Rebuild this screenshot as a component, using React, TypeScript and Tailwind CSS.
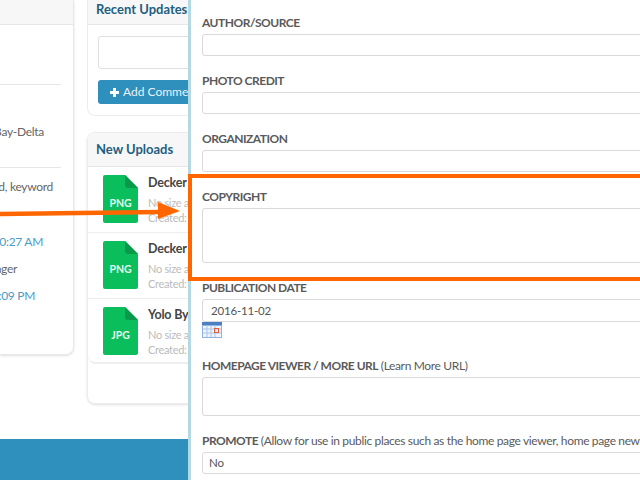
const FileIcon = ({ ext }: { ext: string }) => (
  <div className="relative w-[35px] h-[48px] shrink-0">
    <svg width="35" height="48" viewBox="0 0 35 48" className="block">
      <path d="M2 0H22L35 13V46a2 2 0 0 1-2 2H2a2 2 0 0 1-2-2V2a2 2 0 0 1 2-2Z" fill="#0abf5b" />
      <path d="M22 0L35 13H25a3 3 0 0 1-3-3Z" fill="#089a4a" />
    </svg>
    <span className="absolute left-0 right-0 top-[20px] text-center text-[10.5px] leading-4 font-bold text-[#e6f9ee]">{ext}</span>
  </div>
)

const UploadRow = ({ ext, name, last }: { ext: string; name: string; last?: boolean }) => (
  <div className={`flex gap-[10px] pl-[15px] pt-[8px] ${last ? 'border-b-2 border-[#eeeeee] rounded-b-lg h-[65px]' : 'h-[66px] border-b border-[#eeeeee]'}`}>
    <FileIcon ext={ext} />
    <div className="whitespace-nowrap">
      <div className="text-[12.5px] tracking-[-0.2px] leading-4 font-bold text-[#444444]">{name}</div>
      <div className="mt-1 text-[11px] tracking-[-0.3px] leading-[15px] text-[#bbbbbb]">No size available</div>
      <div className="text-[11px] tracking-[-0.3px] leading-[15px] text-[#bbbbbb]">Created: 2016</div>
    </div>
  </div>
)

const Field = ({ label, note, h, value, pad, gap }: { label: string; note?: string; h: string; value?: string; pad?: string; gap?: boolean }) => (
  <div className={gap ? '' : 'mb-4'}>
    <div className="h-4 leading-[17px] mb-1 text-[12px] whitespace-nowrap text-[#5a5a5a]">
      <span className="font-bold tracking-[-0.5px]">{label}</span>
      {note && <span className="tracking-[-0.35px]"> {note}</span>}
    </div>
    <div className={`${h} ${pad ?? 'pl-2'} w-[520px] border border-[#d9d9d9] rounded-[3px] bg-white text-[11.5px] tracking-[-0.2px] leading-5 text-[#555555] flex items-center`}>{value}</div>
  </div>
)

const Calendar = () => (
  <svg width="20" height="16" viewBox="0 0 20 16" className="block">
    <rect width="20" height="16" fill="#8fb2e0" />
    <rect width="20" height="3" fill="#4a7fc4" />
    <rect x="1" y="4" width="18" height="11" fill="#eef4fb" />
    <path d="M5 3V15M9 3V15M13 3V15M1 7H19M1 11H19" stroke="#a9c4e8" />
    <rect x="12.5" y="6.5" width="4" height="4" fill="none" stroke="#e2603f" />
  </svg>
)

export default function App() {
  return (
    <div className="relative w-[640px] h-[480px] overflow-hidden bg-white flex [font-family:Lato,sans-serif]">
      <div className="w-[188px] shrink-0 flex flex-col overflow-hidden">
        <div className="h-[439px] flex gap-[13px]">
          <div className="w-[74px] h-[355px] shrink-0 border-r border-b border-[#e8e8e8] rounded-br-lg shadow-sm overflow-hidden text-[12px] tracking-[-0.3px] leading-4 text-[#666666]">
            <div className="h-[25px] bg-[#f7f7f7] border-b border-[#e6e6e6]" />
            <div className="h-[60px] border-b border-[#e6e6e6] mr-3" />
            <div className="h-[83px] border-b border-[#e6e6e6] mr-3 flex justify-end pr-[17px] pt-[39px] whitespace-nowrap">San Francisco Bay-Delta</div>
            <div className="flex justify-end pr-[20px] pt-[11px] whitespace-nowrap">Topic field, keyword</div>
            <div className="flex justify-end pr-[30px] pt-[39px] whitespace-nowrap text-[#4a9bc7]">10:27 AM</div>
            <div className="flex justify-end pr-[56px] pt-[11px] whitespace-nowrap">Manager</div>
            <div className="flex justify-end pr-[38px] pt-[11px] whitespace-nowrap text-[#4a9bc7]">1:09 PM</div>
          </div>
          <div className="flex-1 min-w-0 flex flex-col">
            <div className="w-[260px] h-[116px] border border-t-0 border-[#ececec] rounded-b-lg">
              <div className="h-[25px] bg-[#f7f7f7] border-b border-[#e6e6e6] pl-2 pt-px text-[13px] leading-4 font-bold text-[#1f5f80]">Recent Updates</div>
              <div className="ml-[10px] mt-[11px] h-[33px] w-[200px] border border-[#e0e0e0] rounded-[3px]" />
              <div className="ml-[10px] mt-[11px] h-[24px] w-[200px] rounded-[3px] bg-[#2f8fbd] flex items-center pl-[12px] gap-1 text-[12px] text-[#e8f3f8]">
                <svg width="9" height="9" viewBox="0 0 9 9"><path d="M3 0H6V3H9V6H6V9H3V6H0V3H3Z" fill="#fff" /></svg>
                Add Comment
              </div>
            </div>
            <div className="w-[260px] h-[272px] mt-4 border border-[#ececec] rounded-lg shadow-sm">
              <div className="h-[34px] bg-[#f7f7f7] border-b border-[#e6e6e6] rounded-t-lg pl-2 pt-[8px] text-[13px] leading-4 font-bold text-[#1f5f80]">New Uploads</div>
              <UploadRow ext="PNG" name="Decker Island" />
              <UploadRow ext="PNG" name="Decker Island" />
              <UploadRow ext="JPG" name="Yolo Bypass" last />
            </div>
          </div>
        </div>
        <div className="h-[41px] bg-[#2f8fbd]" />
      </div>
      <div className="flex-1 min-w-0 border-l-[3px] border-[#b5d8e3] pl-[11px] pt-[14px] bg-white overflow-hidden">
        <Field label="AUTHOR/SOURCE" h="h-[22px]" />
        <Field label="PHOTO CREDIT" h="h-[22px]" />
        <Field label="ORGANIZATION" h="h-[22px]" />
        <Field label="COPYRIGHT" h="h-[55px]" />
        <Field label="PUBLICATION DATE" h="h-[23px]" value="2016-11-02" gap />
        <div className="mb-[19px]"><Calendar /></div>
        <Field label="HOMEPAGE VIEWER / MORE URL" note="(Learn More URL)" h="h-[39px]" />
        <Field label="PROMOTE" note="(Allow for use in public places such as the home page viewer, home page news)" h="h-[22px]" value="No" pad="pl-[6px]" />
      </div>
      {/* callout drawn on top of the screenshot */}
      <div className="absolute left-[188px] top-[174px] w-[480px] h-[107px] border-4 border-[#ff6600]" />
      <svg width="190" height="30" viewBox="0 0 190 30" className="absolute left-0 top-[198px]">
        <path d="M0 16L160 14" stroke="#ff6600" strokeWidth="4.5" />
        <path d="M158 4L180 13L158 21Z" fill="#ff6600" />
      </svg>
    </div>
  )
}
